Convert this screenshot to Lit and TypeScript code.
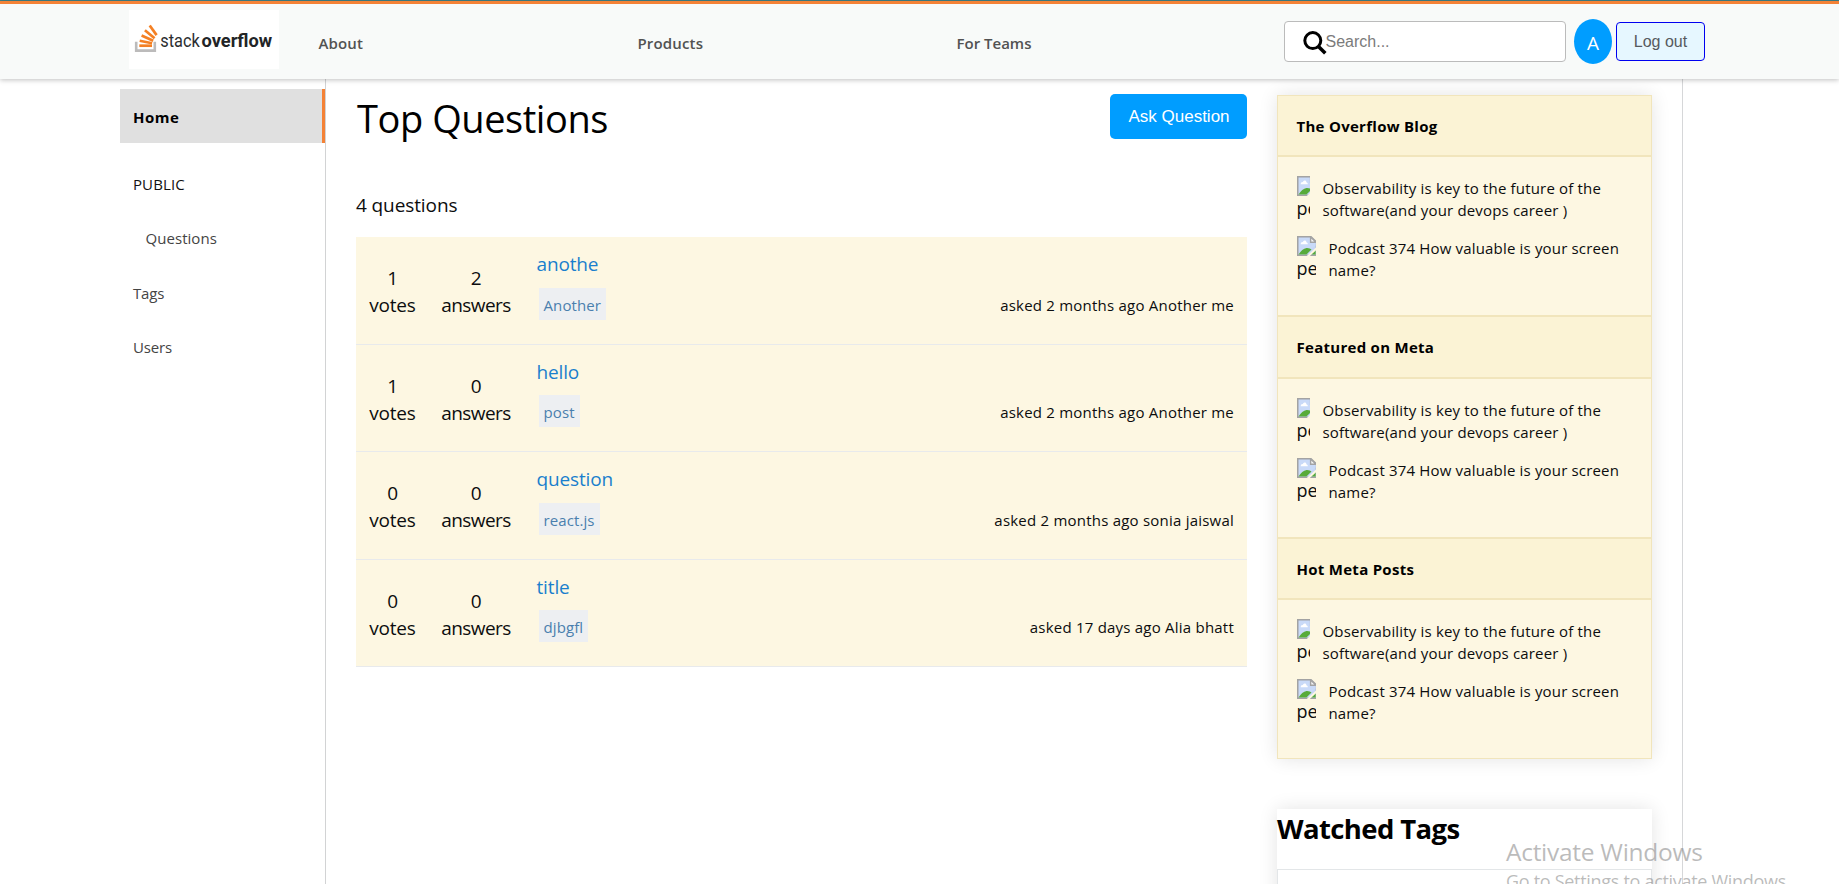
import { LitElement, html, css, svg } from "lit";
import { customElement, property } from "lit/decorators.js";

const sans = css`"Open Sans", "Noto Sans", sans-serif`;
const arial = css`"Liberation Sans", Arial, sans-serif`;

interface Question {
  votes: number;
  answers: number;
  title: string;
  tag: string;
  asked: string;
}

const QUESTIONS: Question[] = [
  { votes: 1, answers: 2, title: "anothe", tag: "Another", asked: "asked 2 months ago Another me" },
  { votes: 1, answers: 0, title: "hello", tag: "post", asked: "asked 2 months ago Another me" },
  { votes: 0, answers: 0, title: "question", tag: "react.js", asked: "asked 2 months ago sonia jaiswal" },
  { votes: 0, answers: 0, title: "title", tag: "djbgfl", asked: "asked 17 days ago Alia bhatt" },
];

const WIDGETS = ["The Overflow Blog", "Featured on Meta", "Hot Meta Posts"];

const logo = html`<svg width="150" height="59" viewBox="0 0 150 59" role="img">
  <rect width="150" height="59" fill="#fff" />
  <path d="M7.2 31.8V40.6H25.8V31.8" fill="none" stroke="#bcbbbb" stroke-width="2.6" />
  <g stroke="#f48024" stroke-width="2.7" fill="none">
    <path d="M10.3 35.7H23" />
    <path d="M10.7 30.8L23.1 33.3" />
    <path d="M12.6 25.4L24.2 30.7" />
    <path d="M15.9 20.3L25.6 28.2" />
    <path d="M20.7 15.5L27.6 25.1" />
  </g>
  <text x="31.3" y="36.6" font-family="Roboto, sans-serif" font-size="19" fill="#2b2d2f" textLength="39.5" lengthAdjust="spacingAndGlyphs">stack</text>
  <text x="72.6" y="36.6" font-family="Roboto, sans-serif" font-weight="700" font-size="19" fill="#222426" textLength="70.6" lengthAdjust="spacingAndGlyphs">overflow</text>
</svg>`;

const searchIcon = html`<svg width="24" height="24" viewBox="0 0 24 24" fill="none" stroke="#000">
  <circle cx="9.8" cy="9.6" r="8" stroke-width="3" />
  <path d="M15.2 15.2L22.3 22.2" stroke-width="3.6" />
</svg>`;

const brokenImage = svg`
  <path d="M.75 .75H14L19.5 6V19.3H.75Z" fill="#c5d6f7" stroke="#a3a3a3" stroke-width="1.5" />
  <path d="M2 2H13.2V6.8H18.5V9.5L9 18.3H2Z" fill="#c9daf8" />
  <path d="M3.6 8.2Q3.6 6 5.8 6Q6.6 3.8 8.4 4.6Q9.4 5.2 9.4 6.2Q11 6.6 10.8 8.2Z" fill="#fff" />
  <path d="M1.6 18.5Q5 12.6 9.5 12Q13 11.8 14.5 13.6L9.4 18.5Z" fill="#57ab3a" />
  <path d="M14 18.5L18.6 14V18.5Z" fill="#57ab3a" />
  <path d="M13.6 1V6.3H19Z" fill="#f6f6f6" stroke="#a3a3a3" stroke-width="1.4" />
  <path d="M9.8 20L20 10.6V13.2L12.8 20Z" fill="#fdf7e2" />`;

@customElement("top-header")
class TopHeader extends LitElement {
  static styles = css`
    :host { display: block; position: relative; z-index: 2; font-family: ${sans}; }
    .strip { display: flow-root; background: #3f7f86; }
    .bar {
      box-sizing: border-box; height: 78px; margin-top: 1px; display: flex; align-items: flex-start;
      border-top: 3px solid #f48236; background: #f8faf9;
      box-shadow: 0 1px 5px rgba(0, 0, 0, 0.25);
    }
    .logo { margin: 6px 0 0 129px; width: 150px; height: 59px; flex: none; }
    .logo svg { display: block; }
    .nav { display: grid; grid-template-columns: 319px 319px 327.5px; margin: 23px 0 0 39.5px; font-size: 15px; line-height: 32px; font-weight: 600; color: #525252; }
    .nav span { letter-spacing: 0.15px; }
    .nav .tight { letter-spacing: 0; }
    .search {
      box-sizing: border-box; display: flex; align-items: center; width: 282px; height: 41px;
      margin-top: 17px; padding-left: 18px; border: 1px solid #bbb; border-radius: 4px; background: #fff;
      font: 16px ${arial}; color: #7b7b7b;
    }
    .search svg { flex: none; margin: 3px -1.5px 0 0; }
    .search span { margin-top: 1px; }
    .avatar { width: 38px; height: 45px; margin: 15px 0 0 8px; border-radius: 50%; background: #009dff; color: #fff; font-size: 19px; line-height: 48px; text-align: center; }
    .logout {
      box-sizing: border-box; width: 89px; height: 39px; margin: 18px 0 0 4px; border: 1px solid #0000f0;
      border-radius: 4px; background: #e6f7ff; color: #565a5e; font: 16px/37px ${arial}; text-align: center;
    }
  `;
  render() {
    return html`<div class="strip"><header class="bar">
      <div class="logo">${logo}</div>
      <nav class="nav"><span>About</span><span>Products</span><span class="tight">For Teams</span></nav>
      <div class="search">${searchIcon}<span>Search...</span></div>
      <div class="avatar">A</div>
      <div class="logout">Log out</div>
    </header></div>`;
  }
}

@customElement("side-nav")
class SideNav extends LitElement {
  static styles = css`
    :host { display: block; box-sizing: border-box; width: 206px; padding-top: 10px; border-right: 1px solid #d2d3d4; font-family: ${sans}; font-size: 15px; color: #444; }
    .item { height: 54.3px; line-height: 55px; padding-left: 13px; }
    .home { box-sizing: border-box; height: 54px; line-height: 56px; border-right: 3px solid #f48236; background: #e0e0e0; font-weight: 700; color: #000; letter-spacing: 0.5px; margin-bottom: 14px; }
    .public { color: #111; letter-spacing: 0.1px; }
    .child { padding-left: 25.5px; letter-spacing: 0.05px; }
    .close { letter-spacing: -0.15px; }
  `;
  render() {
    return html`
      <div class="item home">Home</div>
      <div class="item public">PUBLIC</div>
      <div class="item child">Questions</div>
      <div class="item close">Tags</div>
      <div class="item close">Users</div>`;
  }
}

@customElement("question-row")
class QuestionRow extends LitElement {
  @property({ attribute: false }) question!: Question;
  static styles = css`
    :host { box-sizing: border-box; display: flex; height: 107.5px; padding: 0 13px; border-bottom: 1px solid #e8eaec; background: #fdf7e2; font-family: ${sans}; }
    .stat { display: flex; flex-direction: column; align-items: center; padding-top: 28px; font-size: 19px; line-height: 27px; color: #0c0d0e; }
    .votes { width: 47px; margin-right: 25px; letter-spacing: -0.2px; }
    .answers { width: 70px; margin-right: 25.5px; letter-spacing: -0.55px; }
    .main { flex: 1; display: flex; flex-direction: column; align-items: flex-start; }
    .title { margin-top: 14px; font-size: 19px; line-height: 27px; letter-spacing: -0.15px; color: #1a7fcd; }
    .line { display: flex; align-self: stretch; justify-content: space-between; margin-top: 9.5px; font-size: 15px; line-height: 34px; }
    .tag { height: 32px; margin-left: 2px; padding: 0 5px; background: #edeff2; color: #4a7fae; letter-spacing: 0.1px; }
    .asked { letter-spacing: 0.22px; color: #0c0d0e; }
  `;
  render() {
    const q = this.question;
    return html`
      <div class="stat votes"><span>${q.votes}</span><span>votes</span></div>
      <div class="stat answers"><span>${q.answers}</span><span>answers</span></div>
      <div class="main">
        <span class="title">${q.title}</span>
        <div class="line"><span class="tag">${q.tag}</span><span class="asked">${q.asked}</span></div>
      </div>`;
  }
}

@customElement("question-list")
class QuestionList extends LitElement {
  static styles = css`
    :host { display: block; width: 891px; margin-left: 30px; font-family: ${sans}; color: #000; }
    .head { display: flex; justify-content: space-between; align-items: flex-start; height: 106px; padding-top: 15px; box-sizing: border-box; }
    h1 { margin: 0 0 0 1px; font-size: 38px; line-height: 48px; font-weight: 400; letter-spacing: -0.44px; }
    .ask { width: 137px; height: 45px; border-radius: 5px; background: #009dff; color: #fff; font: 17px/45px ${arial}; text-align: center; text-indent: 1px; }
    .count { height: 52px; font-size: 19px; line-height: 40px; letter-spacing: -0.1px; color: #0c0d0e; }
  `;
  render() {
    return html`
      <div class="head"><h1>Top Questions</h1><div class="ask">Ask Question</div></div>
      <div class="count">4 questions</div>
      ${QUESTIONS.map((q) => html`<question-row .question=${q}></question-row>`)}`;
  }
}

@customElement("side-widgets")
class SideWidgets extends LitElement {
  static styles = css`
    :host { display: block; width: 375px; margin-left: 30px; padding-top: 16px; font-family: ${sans}; }
    .card { box-shadow: 0 0 18px rgba(0, 0, 0, 0.11); }
    .title { box-sizing: border-box; height: 61.4px; padding-left: 18.5px; border: 1px solid #f1e5bc; background: #fbf3d5; font-size: 15px; line-height: 60px; font-weight: 700; letter-spacing: 0.28px; color: #000; }
    .body { box-sizing: border-box; height: 159.93px; padding: 19px 18.5px 0; border: 1px solid #f1e5bc; background: #fdf7e2; }
    .entry { display: flex; height: 60px; color: #0c0d0e; }
    .thumb { flex: none; width: 13px; margin-right: 13px; overflow: hidden; font-size: 18px; line-height: 24px; }
    .thumb.wide { width: 19px; }
    .thumb svg { display: block; }
    .text { margin-top: 1px; font-size: 15px; line-height: 22px; letter-spacing: 0.17px; white-space: nowrap; }
    .watched { margin-top: 50px; background: #fff; }
    h2 { margin: 0; height: 60px; font-size: 27.5px; line-height: 39px; font-weight: 700; letter-spacing: -0.62px; }
    .box { box-sizing: border-box; height: 90px; border: 1px solid #e3e6e8; }
  `;
  render() {
    const thumb = (wide: boolean) => html`<div class="thumb ${wide ? "wide" : ""}"><svg width="20" height="20" viewBox="0 0 20 20">${brokenImage}</svg>pe</div>`;
    return html`
      <div class="card">
        ${WIDGETS.map((w) => html`
          <div class="title">${w}</div>
          <div class="body">
            <div class="entry">${thumb(false)}<div class="text">Observability is key to the future of the<br />software(and your devops career )</div></div>
            <div class="entry">${thumb(true)}<div class="text">Podcast 374 How valuable is your screen<br />name?</div></div>
          </div>`)}
      </div>
      <div class="card watched"><h2>Watched Tags</h2><div class="box"></div></div>`;
  }
}

@customElement("app-root")
class AppRoot extends LitElement {
  static styles = css`
    :host { display: block; position: relative; height: 884px; overflow: hidden; background: #fff; font-family: ${sans}; }
    .page { display: flex; box-sizing: border-box; width: 1563px; height: 805px; margin-left: 120px; border-right: 1px solid #d6d7d9; }
    .activate { position: absolute; left: 1506px; top: 833px; z-index: 3; color: rgba(120, 120, 120, 0.5); white-space: nowrap; }
    .activate .big { font-size: 24.5px; line-height: 38px; letter-spacing: -0.28px; }
    .activate .small { font-size: 18px; line-height: 20px; letter-spacing: -0.3px; }
  `;
  render() {
    return html`
      <top-header></top-header>
      <div class="page">
        <side-nav></side-nav>
        <question-list></question-list>
        <side-widgets></side-widgets>
      </div>
      <div class="activate">
        <div class="big">Activate Windows</div>
        <div class="small">Go to Settings to activate Windows.</div>
      </div>`;
  }
}
